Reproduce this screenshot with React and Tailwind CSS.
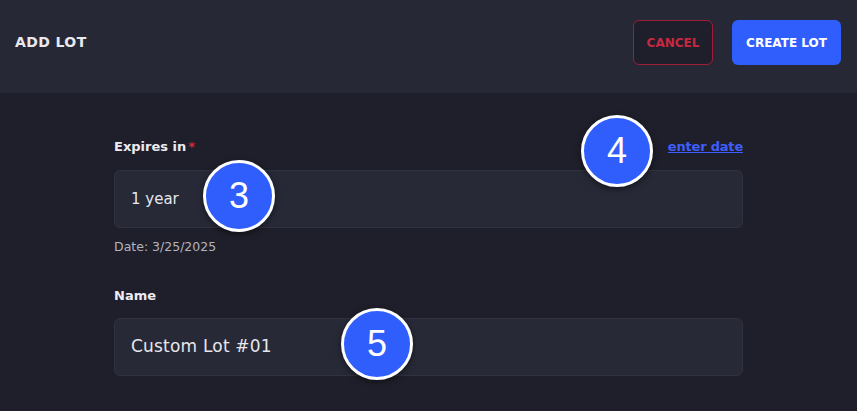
import React from 'react';

const Badge = ({ n, className = '' }) => (
  <div
    className={`absolute w-[72px] h-[72px] rounded-full bg-[#2f5efc] border-[3px] border-white shadow-[0_2px_6px_rgba(0,0,0,0.5)] flex items-center justify-center text-white text-[36px] leading-none ${className}`}
    style={{ fontFamily: '"Liberation Sans", Arial, sans-serif' }}
  >
    {n}
  </div>
);

export default function App() {
  return (
    <div
      className="w-[857px] h-[411px] overflow-hidden bg-[#1f1f2b]"
      style={{ fontFamily: '"DejaVu Sans", "Open Sans", sans-serif' }}
    >
      <div className="h-[93px] bg-[#262836] flex items-start justify-between pl-[15px] pr-4 pt-5">
        <h1 className="h-[45px] flex items-center text-[14px] font-bold tracking-[0.4px] text-[#e8e8ee]">ADD LOT</h1>
        <div className="flex items-center gap-[19px]">
          <button className="w-[80px] h-[45px] rounded-md border border-[#9e1e38] bg-[#1f1f2b] text-[#c8283f] text-[12px] font-bold">
            CANCEL
          </button>
          <button className="w-[109px] h-[45px] rounded-md bg-[#2f5efc] text-white text-[12px] font-bold">
            CREATE LOT
          </button>
        </div>
      </div>

      <div className="relative w-[629px] mx-auto pt-[44px]">
        <div className="h-5 flex items-center justify-between">
          <label className="text-[13px] font-bold text-[#ececf2]">
            Expires in<span className="text-[#d02a40] ml-0.5">*</span>
          </label>
          <a className="text-[13px] font-semibold tracking-[-0.2px] text-[#3d5efc] underline">enter date</a>
        </div>
        <div className="mt-[13px] h-[58px] rounded-md bg-[#272937] border border-[#30323f] flex items-center px-4 text-[15px] text-[#e6e6ec]">
          1 year
        </div>
        <p className="mt-[11px] text-[12.5px] leading-4 text-[#b3b3bd]">Date: 3/25/2025</p>

        <div className="mt-[31px] h-5 flex items-center">
          <label className="text-[13px] font-bold text-[#ececf2]">Name</label>
        </div>
        <div className="mt-3 h-[58px] rounded-md bg-[#272937] border border-[#30323f] flex items-center px-4 text-[17px] tracking-[0.2px] text-[#e6e6ec]">
          Custom Lot #01
        </div>

        <Badge n="3" className="left-[89px] top-[67px]" />
        <Badge n="4" className="left-[467px] top-[22px]" />
        <Badge n="5" className="left-[227px] top-[215px]" />
      </div>
    </div>
  );
}
